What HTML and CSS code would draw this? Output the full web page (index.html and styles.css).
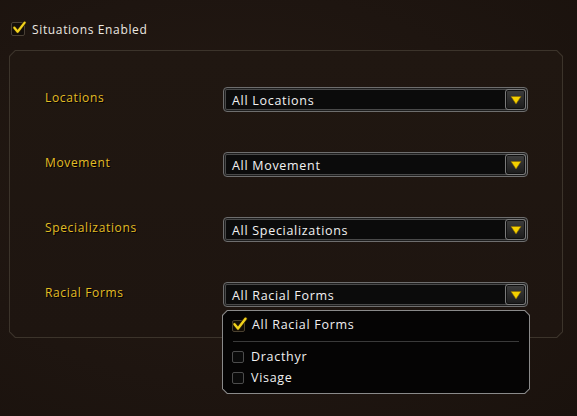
FILE: index.html
```html
<!DOCTYPE html>
<html>
<head>
<meta charset="utf-8">
<link rel="stylesheet" href="styles.css">
</head>
<body>
<div class="top">
  <span class="cb cb-top">
    <svg class="check" viewBox="0 0 16 16" width="16" height="16"><path d="M2.5 8.2 L6 12.5 L13.5 2.8" fill="none" stroke="#2a1e05" stroke-width="4" stroke-linecap="round" stroke-linejoin="round"/><path d="M2.5 8.2 L6 12.5 L13.5 2.8" fill="none" stroke="#f2d21c" stroke-width="2.4" stroke-linecap="round" stroke-linejoin="round"/></svg>
  </span>
  <span class="top-label">Situations Enabled</span>
</div>
<div class="panel">
  <div class="panel-content">
    <div class="row">
      <div class="label">Locations</div>
      <div class="dd"><span class="dd-text">All Locations</span><span class="dd-btn"><svg viewBox="0 0 12 10" width="12" height="10"><path d="M1 1.5 H11 L6 9 Z" fill="#f4d000" stroke="#8a6a00" stroke-width="0.6"/></svg></span></div>
    </div>
    <div class="row">
      <div class="label">Movement</div>
      <div class="dd"><span class="dd-text">All Movement</span><span class="dd-btn"><svg viewBox="0 0 12 10" width="12" height="10"><path d="M1 1.5 H11 L6 9 Z" fill="#f4d000" stroke="#8a6a00" stroke-width="0.6"/></svg></span></div>
    </div>
    <div class="row">
      <div class="label">Specializations</div>
      <div class="dd"><span class="dd-text">All Specializations</span><span class="dd-btn"><svg viewBox="0 0 12 10" width="12" height="10"><path d="M1 1.5 H11 L6 9 Z" fill="#f4d000" stroke="#8a6a00" stroke-width="0.6"/></svg></span></div>
    </div>
    <div class="row">
      <div class="label">Racial Forms</div>
      <div class="dd"><span class="dd-text">All Racial Forms</span><span class="dd-btn"><svg viewBox="0 0 12 10" width="12" height="10"><path d="M1 1.5 H11 L6 9 Z" fill="#f4d000" stroke="#8a6a00" stroke-width="0.6"/></svg></span>
        <div class="menu">
          <div class="menu-inner">
            <div class="item item-all">
              <span class="cb cb-menu-checked">
                <svg class="check" viewBox="0 0 16 16" width="16" height="16"><path d="M2.5 8.2 L6 12.5 L13.5 2.8" fill="none" stroke="#2a1e05" stroke-width="4" stroke-linecap="round" stroke-linejoin="round"/><path d="M2.5 8.2 L6 12.5 L13.5 2.8" fill="none" stroke="#f2d21c" stroke-width="2.4" stroke-linecap="round" stroke-linejoin="round"/></svg>
              </span>
              <span class="item-text">All Racial Forms</span>
            </div>
            <div class="sep"></div>
            <div class="item">
              <span class="cb cb-empty"></span>
              <span class="item-text">Dracthyr</span>
            </div>
            <div class="item">
              <span class="cb cb-empty"></span>
              <span class="item-text">Visage</span>
            </div>
          </div>
        </div>
      </div>
    </div>
  </div>
</div>
</body>
</html>
```
FILE: styles.css
```css
html, body {
  margin: 0;
  padding: 0;
}
body {
  width: 577px;
  height: 416px;
  overflow: hidden;
  background: radial-gradient(ellipse at 40% 45%, #251a13 0%, #1e1510 60%, #1a120d 100%);
  font-family: "Open Sans", "DejaVu Sans", sans-serif;
  font-size: 12px;
  letter-spacing: 0.65px;
}
.top {
  display: flex;
  align-items: center;
  padding: 21px 0 0 11px;
  height: 16px;
}
.cb {
  position: relative;
  display: inline-block;
  box-sizing: border-box;
  flex: none;
}
.cb-top {
  width: 14px;
  height: 14px;
  border: 1px solid #4a4035;
  border-radius: 2px;
  background: #120d0a;
}
.check {
  position: absolute;
  left: 0;
  top: -3px;
  width: 15px;
  height: 15px;
}
.top-label {
  margin-left: 7px;
  color: #ece8e0;
  font-size: 12px;
}
.panel {
  position: relative;
  margin: 13px 14px 0 9px;
  height: 288px;
}
.panel::before {
  content: "";
  position: absolute;
  inset: 0;
  background: #3c342b;
  clip-path: polygon(6px 0, calc(100% - 6px) 0, 100% 6px, 100% calc(100% - 6px), calc(100% - 6px) 100%, 6px 100%, 0 calc(100% - 6px), 0 6px);
}
.panel::after {
  content: "";
  position: absolute;
  inset: 1px;
  background: linear-gradient(180deg, #201711 0%, #1e1510 100%);
  clip-path: polygon(5.5px 0, calc(100% - 5.5px) 0, 100% 5.5px, 100% calc(100% - 5.5px), calc(100% - 5.5px) 100%, 5.5px 100%, 0 calc(100% - 5.5px), 0 5.5px);
}
.panel-content {
  position: relative;
  z-index: 1;
  box-sizing: border-box;
  height: 100%;
  padding: 37px 35px 0 36px;
  display: flex;
  flex-direction: column;
  gap: 40px;
}
.row {
  display: flex;
  align-items: center;
  height: 25px;
}
.label {
  width: 178px;
  flex: none;
  color: #e3bd24;
  font-size: 12px;
  padding-bottom: 4px;
  text-shadow: 1px 1px 0 #000;
}
.dd {
  position: relative;
  flex: 1;
  height: 25px;
  box-sizing: border-box;
  border: 1px solid #6e6e6e;
  border-radius: 4px;
  background: #0b0b0b;
  box-shadow: inset 0 0 0 1px #1e1e1e, inset 0 0 0 2px #4a4a4a;
  display: flex;
  align-items: center;
}
.dd-text {
  flex: 1;
  padding-left: 8px;
  padding-top: 1px;
  color: #f2f2f2;
  font-size: 12.5px;
  letter-spacing: 0.7px;
}
.dd-btn {
  flex: none;
  width: 21px;
  height: 21px;
  margin-right: 1px;
  box-sizing: border-box;
  border: 1px solid #7a7a7a;
  border-radius: 3px;
  background: linear-gradient(180deg, #3e3e3e 0%, #1c1c1c 100%);
  box-shadow: inset 0 0 0 1px #101010;
  display: flex;
  align-items: center;
  justify-content: center;
}
.menu {
  position: absolute;
  left: -2px;
  top: 27px;
  width: 308px;
  height: 84px;
  box-sizing: border-box;
  padding: 1px;
  background: #8a8a8a;
  clip-path: polygon(5px 0, calc(100% - 5px) 0, 100% 5px, 100% calc(100% - 5px), calc(100% - 5px) 100%, 5px 100%, 0 calc(100% - 5px), 0 5px);
  z-index: 5;
}
.menu-inner {
  height: 100%;
  box-sizing: border-box;
  background: #050404;
  clip-path: polygon(4.5px 0, calc(100% - 4.5px) 0, 100% 4.5px, 100% calc(100% - 4.5px), calc(100% - 4.5px) 100%, 4.5px 100%, 0 calc(100% - 4.5px), 0 4.5px);
  padding: 4px 9px 0 9px;
}
.item {
  display: flex;
  align-items: center;
  height: 21px;
}
.item-all {
  height: 18px;
}
.cb-menu-checked {
  width: 13px;
  height: 12px;
  border: 1px solid #4a4030;
  border-radius: 2px;
  background: #120d06;
  margin-top: 3px;
}
.cb-menu-checked .check {
  left: -1px;
  top: -5px;
  width: 16px;
  height: 16px;
}
.cb-empty {
  width: 12px;
  height: 12px;
  border: 1px solid #4c4c4c;
  border-radius: 2px;
  background: #0a0a0a;
  margin-left: 0;
}
.item-text {
  margin-left: 7px;
  color: #f0f0f0;
  font-size: 12.5px;
  letter-spacing: 0.7px;
}
.sep {
  height: 1px;
  background: #3a3a3a;
  margin: 8px 1px 4px 1px;
}
```
